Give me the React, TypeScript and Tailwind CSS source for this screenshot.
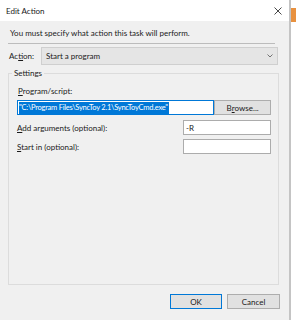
export default function App() {
  return (
    <div
      className="flex h-[320px] w-[296px] bg-white text-[8px] leading-none text-[#1a1a1a]"
      style={{ fontFamily: 'Lato, "Open Sans", sans-serif' }}
    >
      {/* Dialog window */}
      <div className="flex w-[291px] flex-col border-r-2 border-[#c4c4c4] bg-[#f0f0f0]">
        {/* Title bar */}
        <div className="flex h-[21px] items-center justify-between bg-white pl-[6px] pr-[5px]">
          <span>Edit Action</span>
          <svg width="8" height="8" viewBox="0 0 8 8" className="mr-[2px]">
            <path d="M0.5 0.5 L7.5 7.5 M7.5 0.5 L0.5 7.5" stroke="#333" strokeWidth="0.9" />
          </svg>
        </div>

        {/* Body */}
        <div className="flex flex-1 flex-col px-[8px]">
          <div className="pl-[2px] pt-[8px]">You must specify what action this task will perform.</div>
          <div className="mt-[6px] mr-[6px] h-px bg-[#bcbcbc]" />

          {/* Action row */}
          <div className="mt-[3px] flex items-center">
            <span className="w-[33px] pl-[1px]">
              Ac<u>t</u>ion:
            </span>
            <div className="flex h-[18px] w-[237px] items-center justify-between border border-[#cfcfcf] bg-[#e5e5e5] pl-[4px] pr-[4px]">
              <span>Start a program</span>
              <svg width="6" height="4" viewBox="0 0 6 4">
                <path d="M0.5 0.5 L3 3 L5.5 0.5" fill="none" stroke="#555" strokeWidth="0.8" />
              </svg>
            </div>
          </div>

          {/* Settings group */}
          <div className="relative mt-[8px] mr-[2px] flex h-[212px] flex-col border border-[#dcdcdc] pt-[13px] pl-[8px] pr-[7px]">
            <span className="absolute top-[-5px] left-[3px] bg-[#f0f0f0] px-[2px]">Settings</span>

            <div className="pl-[1px]">
              <u>P</u>rogram/script:
            </div>
            <div className="mt-[5px] flex items-center justify-between">
              <div className="flex h-[15px] w-[198px] items-center border border-[#0078d7] bg-white pl-px">
                <span className="flex h-[12px] items-center bg-[#0078d7] pr-[1px] text-[7.5px] tracking-[-0.25px] text-white">
                  "C:\Program Files\SyncToy 2.1\SyncToyCmd.exe"
                </span>
              </div>
              <div className="flex h-[15px] w-[57px] items-center justify-center border border-[#adadad] bg-[#e1e1e1]">
                B<u>r</u>owse...
              </div>
            </div>

            <div className="mt-[5px] flex items-center justify-between">
              <span>
                <u>A</u>dd arguments (optional):
              </span>
              <div className="flex h-[15px] w-[88px] items-center border border-[#acacac] bg-white pl-[2px]">-R</div>
            </div>
            <div className="mt-[4px] flex items-center justify-between">
              <span>
                <u>S</u>tart in (optional):
              </span>
              <div className="h-[15px] w-[88px] border border-[#acacac] bg-white" />
            </div>
          </div>

          {/* Buttons */}
          <div className="mt-[9px] flex justify-end gap-[5px] pr-[1px]">
            <div className="flex h-[15px] w-[52px] items-center justify-center border border-[#0078d7] bg-[#e1e1e1]">
              OK
            </div>
            <div className="flex h-[15px] w-[53px] items-center justify-center border border-[#adadad] bg-[#e1e1e1]">
              Cancel
            </div>
          </div>
        </div>
      </div>

      {/* Background behind the dialog */}
      <div className="flex flex-1 flex-col">
        <div className="mt-[8px] h-[14px] bg-[#e8913f]" />
      </div>
    </div>
  );
}
